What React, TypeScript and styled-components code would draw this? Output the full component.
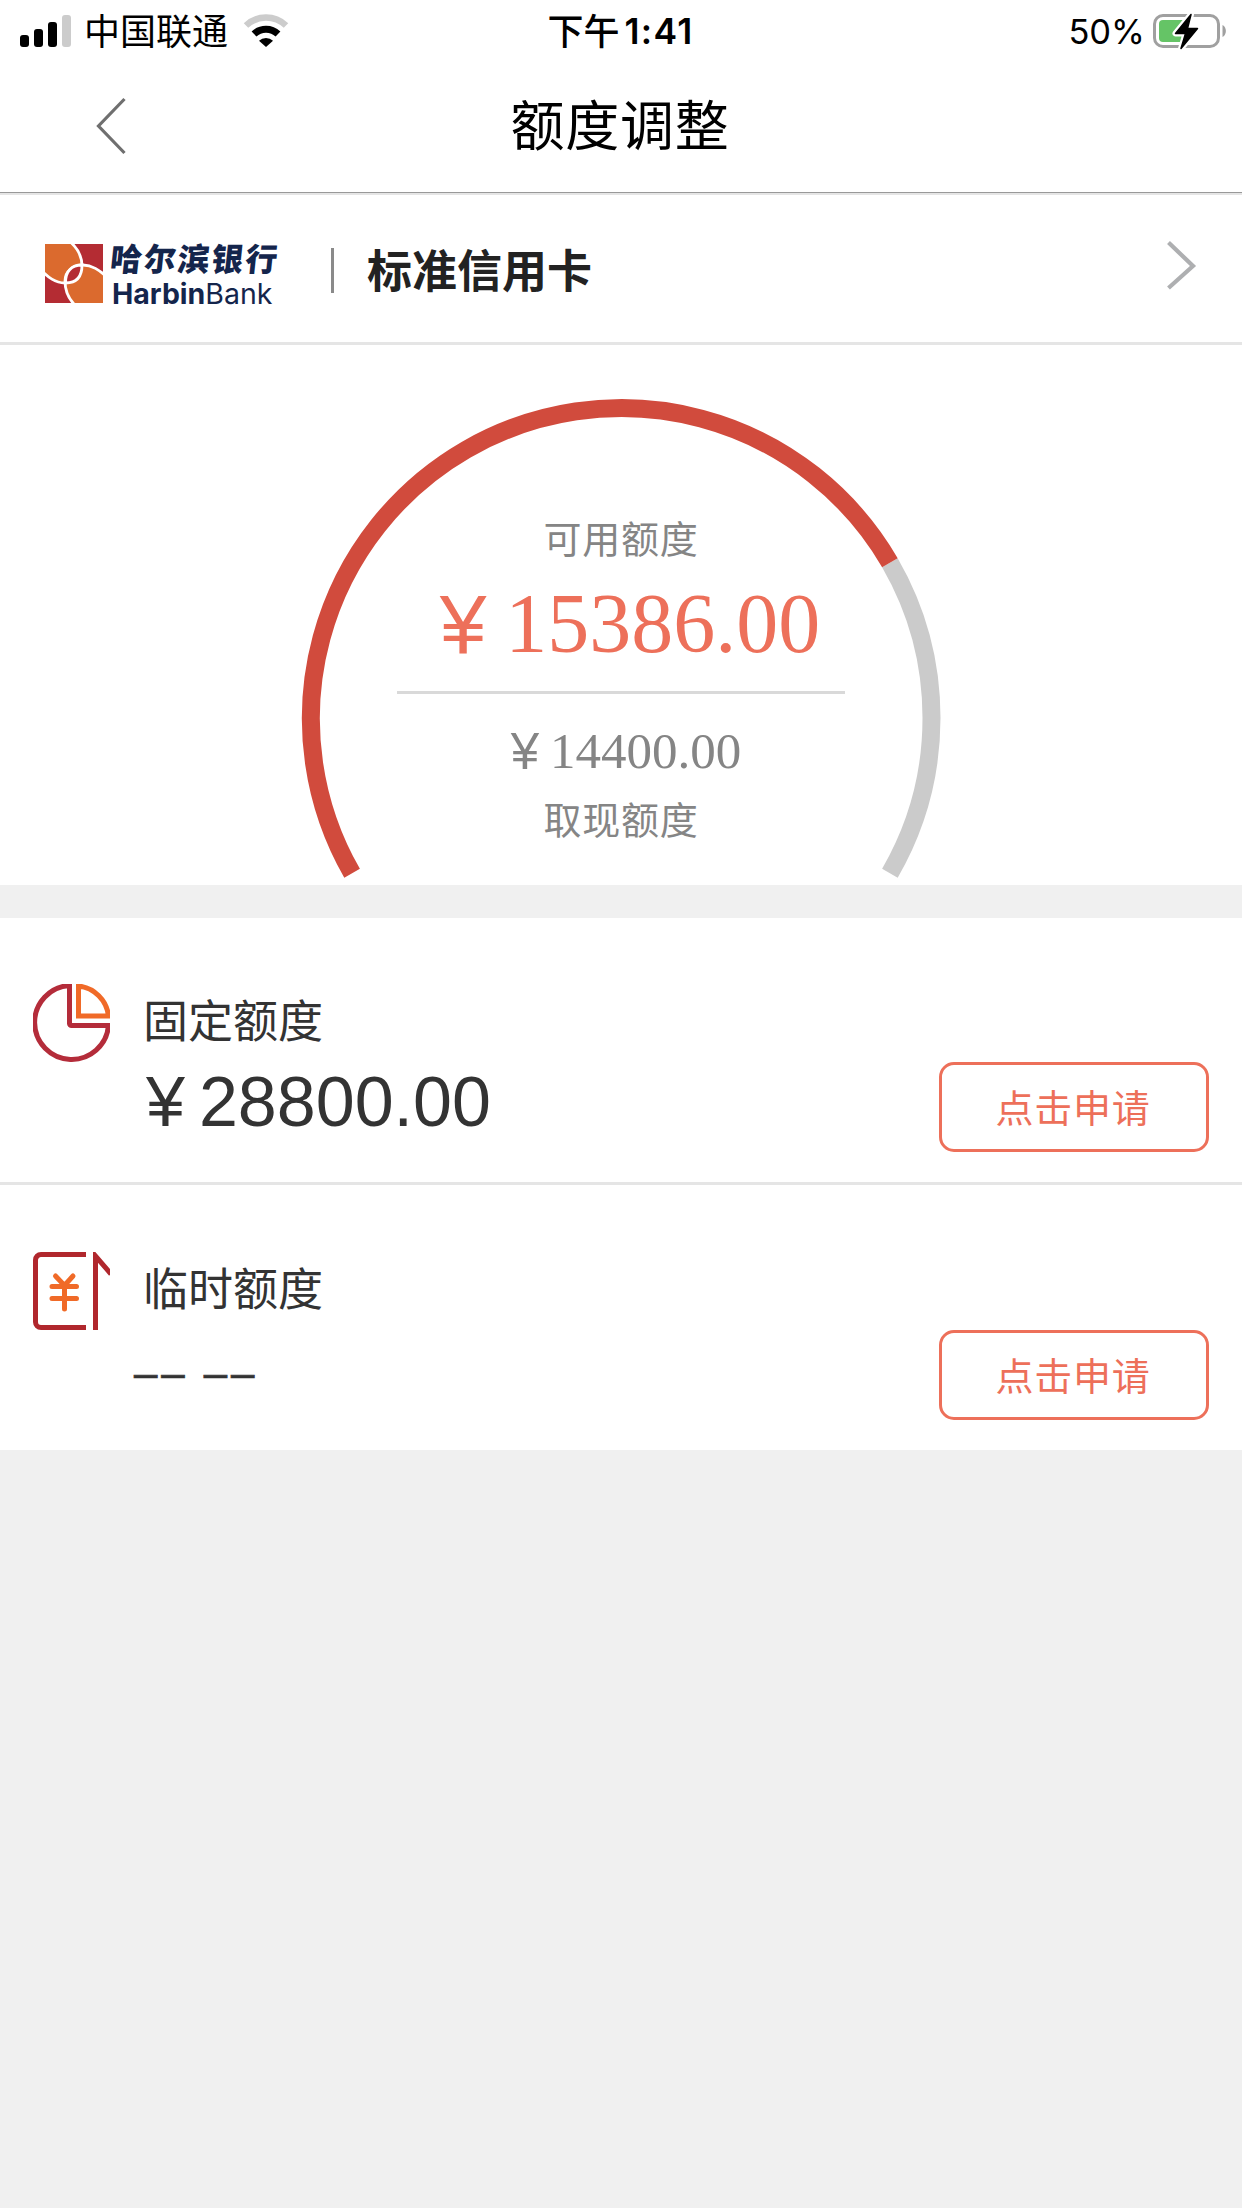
import React from "react";
import styled, { createGlobalStyle } from "styled-components";

const cjk = `"Liberation Sans", "Noto Sans CJK SC", sans-serif`;
const status = `Inter, "Noto Sans CJK SC", sans-serif`;
const coral = "#ed705a";

const GlobalStyle = createGlobalStyle`
  *, *::before, *::after { box-sizing: border-box; }
  body { margin: 0; background: #f0f0f0; }
`;

const Screen = styled.div`
  width: 1242px;
  min-height: 2208px;
  background: #f0f0f0;
  font-family: ${cjk};
  color: #333;
`;

const StatusBar = styled.header`
  display: grid;
  grid-template-columns: 1fr auto 1fr;
  align-items: center;
  height: 60px;
  padding: 0 14px 0 20px;
  background: #fff;
  color: #000;
  font-family: ${status};
  font-size: 36px;
  line-height: 60px;

  span { padding-top: 2px; }
`;

const Carrier = styled.div`
  display: flex;
  align-items: center;

  svg:last-child { margin-left: 15px; }
`;

const CarrierName = styled.span`
  margin-left: 12px;
  font-size: 36px;
`;

const Clock = styled.div`
  display: flex;
  gap: 5px;
  padding-right: 7px;
  font-weight: 500;
`;

const ClockTime = styled.span`
  font-size: 35.5px;
  font-weight: 600;
  letter-spacing: 1.3px;
`;

const Power = styled.div`
  display: flex;
  align-items: center;
  justify-content: flex-end;
  gap: 8px;
  font-size: 34.5px;
`;

const NavBar = styled.nav`
  display: grid;
  grid-template-columns: 1fr auto 1fr;
  align-items: center;
  height: 132px;
  padding-left: 95px;
  padding-right: 97px;
  background: #fff;
`;

const BackButton = styled.button`
  display: flex;
  justify-self: start;
  padding: 0;
  border: 0;
  background: none;
`;

const PageTitle = styled.h1`
  margin: 0;
  padding-top: 2px;
  color: #000;
  font-size: 54px;
  font-weight: 400;
  line-height: 60px;
  letter-spacing: 0.8px;
`;

const NavRule = styled.div`
  height: 3px;
  border-top: 1px solid #999;
  background: #e5e5e5;
`;

const CardRow = styled.section`
  display: flex;
  align-items: center;
  height: 150px;
  padding: 0 45px;
  border-bottom: 3px solid #e5e5e5;
  background: #fff;
`;

const Brand = styled.div`
  display: flex;
  width: 286px;
  height: 59px;
  margin-top: 9px;
  gap: 7px;
`;

const BrandText = styled.div`
  display: flex;
  flex-direction: column;
  color: #14254c;
  white-space: nowrap;

  > span { flex-shrink: 0; }
`;

const BrandChinese = styled.span`
  height: 34px;
  font-family: "Noto Sans CJK SC", sans-serif;
  font-size: 32px;
  font-weight: 900;
  line-height: 26px;
  letter-spacing: 1.8px;
  transform: skewX(-6deg);
`;

const BrandLatin = styled.span`
  padding-left: 2px;
  font-family: Inter, sans-serif;
  font-size: 28.5px;
  font-weight: 400;
  line-height: 31px;

  b { font-weight: 700; }
`;

const Divider = styled.span`
  width: 3px;
  height: 45px;
  margin: 4px 33px 0 0;
  background: #8a8a8a;
`;

const CardName = styled.h2`
  flex: 1;
  margin: 0;
  padding-top: 8px;
  color: #222;
  font-size: 45px;
  font-weight: 700;
  line-height: 50px;
`;

const Gauge = styled.section`
  display: grid;
  justify-items: center;
  height: 540px;
  background: #fff;

  > * { grid-area: 1 / 1; }
`;

const Readout = styled.div`
  display: flex;
  flex-direction: column;
  align-items: center;
  width: 448px;
  padding-top: 175px;
  color: #858585;
`;

const Caption = styled.div`
  font-size: 38px;
  line-height: 40px;
  letter-spacing: 0.8px;
`;

const Money = styled.div<{ $size: number; $gap: number; $shift: number }>`
  display: flex;
  gap: ${(p) => p.$gap}px;
  padding-left: ${(p) => p.$shift}px;
  font-size: ${(p) => p.$size}px;
  line-height: 1;
  white-space: nowrap;
`;

const Available = styled(Money)`
  margin-top: 22px;
  color: ${coral};
`;

const Cash = styled(Money)`
  margin: 32px 0 24px;
`;

const SerifDigits = styled.span`
  font-family: "Liberation Serif", serif;
`;

const Rule = styled.div`
  width: 448px;
  height: 3px;
  margin-top: 25px;
  background: #d9d9d9;
`;

const Limits = styled.main`
  margin-top: 33px;
`;

const LimitRow = styled.section<{ $ruled?: boolean }>`
  display: flex;
  height: ${(p) => (p.$ruled ? 267 : 265)}px;
  padding: ${(p) => (p.$ruled ? 66 : 67)}px 33px 0;
  border-bottom: ${(p) => (p.$ruled ? "3px solid #e5e5e5" : "0")};
  background: #fff;
`;

const LimitBody = styled.div`
  flex: 1;
  padding: 14px 0 0 33px;
`;

const LimitTitle = styled.h3`
  margin: 0;
  font-size: 45px;
  font-weight: 400;
  line-height: 50px;
`;

const LimitAmount = styled.div`
  display: flex;
  gap: 14px;
  margin: 18px 0 0 3px;
  font-size: 70px;
  line-height: 72px;
`;

const NoAmount = styled.div`
  margin: 32px 0 0 -9px;
  font-size: 42px;
  line-height: 50px;
  letter-spacing: 3.8px;
  -webkit-text-stroke: 0.7px #333;
`;

const ApplyButton = styled.button`
  width: 270px;
  height: 90px;
  margin-top: 78px;
  padding: 3px 2px 0 0;
  border: 3px solid ${coral};
  border-radius: 15px;
  background: #fff;
  color: ${coral};
  font-family: ${cjk};
  font-size: 38px;
  line-height: 40px;
  letter-spacing: 0.8px;
`;

const Signal = () => (
  <svg width="52" height="60" viewBox="0 0 52 60">
    <rect x="0" y="34" width="9" height="12" rx="3" />
    <rect x="14" y="28" width="9" height="18" rx="3" />
    <rect x="28" y="21" width="9" height="25" rx="3" />
    <rect x="42" y="14" width="9" height="32" rx="3" fill="#ccc" />
  </svg>
);

const Wifi = () => (
  <svg width="46" height="60" viewBox="0 0 46 60" fill="none">
    <path d="M3 24.5a29 29 0 0 1 40 0" stroke="#ccc" strokeWidth="6.5" />
    <path d="M11 33a17.5 17.5 0 0 1 24 0" stroke="#000" strokeWidth="7" />
    <path d="M16 39.8a10 10 0 0 1 14 0L23 46z" fill="#000" />
  </svg>
);

const Battery = () => (
  <svg width="75" height="60" viewBox="0 0 75 60">
    <rect x="1.5" y="14.5" width="64" height="31" rx="8.5" fill="none" stroke="#a0a0a0" strokeWidth="3" />
    <path d="M10 19h24v22H10a4 4 0 0 1-4-4V23a4 4 0 0 1 4-4z" fill="#65c466" />
    <path d="M69.5 24c4.5 2 4.5 10 0 12z" fill="#a0a0a0" />
    <path
      d="M38 13.5 22.5 32.5h10L28 47.5 44.5 27.5h-10z"
      stroke="#fff"
      strokeWidth="6"
      strokeLinejoin="round"
      fill="#fff"
    />
    <path d="M38 13.5 22.5 32.5h10L28 47.5 44.5 27.5h-10z" stroke="#000" strokeWidth="1.5" strokeLinejoin="round" />
  </svg>
);

const BackIcon = () => (
  <svg width="34" height="60" viewBox="0 0 34 60" fill="none">
    <path d="M29.5 3 3.5 30l26 27" stroke="#6f6f6f" strokeWidth="3.2" />
  </svg>
);

const ForwardIcon = styled.svg`
  margin-top: -7px;
`;

const Forward = () => (
  <ForwardIcon width="30" height="50" viewBox="0 0 30 50" fill="none">
    <path d="M1.5 2.5 26 26 1.5 48" stroke="#aeafb1" strokeWidth="4.2" />
  </ForwardIcon>
);

const HarbinMark = () => (
  <svg width="58" height="59" viewBox="0 0 58 59">
    <rect width="58" height="59" fill="#b42c33" />
    <g stroke="#fff" strokeWidth="2.8">
      <path d="M-4-4H23C32 3 37 12 37 22 37 33 30 39 20 39 10 39 3 33-4 26z" fill="#db6a2e" />
      <path d="M62 63H32C24 56 20 46 20 37 20 27 28 21 38 21 47 21 54 26 62 33z" fill="#db6a2e" />
      <path d="M37 21C37 33 31 39 20.5 39 20.5 28 26 21 37 21z" fill="#b42c33" />
    </g>
  </svg>
);

const Arc = () => (
  <svg width="660" height="540" viewBox="-330 0.5 660 540" fill="none" strokeWidth="18">
    <path d="M268.9 218.25A310.5 310.5 0 0 1 268.9 528.75" stroke="#cbcbcb" />
    <path d="M-268.9 528.75A310.5 310.5 0 0 1 268.9 218.25" stroke="#d14b3d" />
  </svg>
);

const PieIcon = () => (
  <svg width="77" height="78" viewBox="0 0 77 78" fill="none" strokeWidth="5">
    <path d="M36.5 1.5A37 37 0 1 0 75.5 41.5H38.5a2 2 0 0 1-2-2z" stroke="#b42c3a" />
    <path d="M45.5 2V32H75.5A34 34 0 0 0 45.5 2z" stroke="#f06a28" />
  </svg>
);

const BillIcon = () => (
  <svg width="77" height="78" viewBox="0 0 77 78" fill="none" strokeWidth="5">
    <path d="M53 2.5H8a5.5 5.5 0 0 0-5.5 5.5V70A5.5 5.5 0 0 0 8 75.5h45M62.5 78V4L78 22" stroke="#b0272d" />
    <path d="M22.5 24 31.5 33.5 40 24M31.5 33V57M19 34.5H43.5M19 46.5H43.5" stroke="#f06a28" strokeLinecap="round" />
  </svg>
);

export default function App() {
  return (
    <Screen>
      <GlobalStyle />
      <StatusBar>
        <Carrier>
          <Signal />
          <CarrierName>中国联通</CarrierName>
          <Wifi />
        </Carrier>
        <Clock>
          <span>下午</span>
          <ClockTime>1:41</ClockTime>
        </Clock>
        <Power>
          <span>50%</span>
          <Battery />
        </Power>
      </StatusBar>
      <NavBar>
        <BackButton aria-label="返回">
          <BackIcon />
        </BackButton>
        <PageTitle>额度调整</PageTitle>
      </NavBar>
      <NavRule />
      <CardRow>
        <Brand>
          <HarbinMark />
          <BrandText>
            <BrandChinese>哈尔滨银行</BrandChinese>
            <BrandLatin>
              <b>Harbin</b>Bank
            </BrandLatin>
          </BrandText>
        </Brand>
        <Divider />
        <CardName>标准信用卡</CardName>
        <Forward />
      </CardRow>
      <Gauge>
        <Arc />
        <Readout>
          <Caption>可用额度</Caption>
          <Available $size={84} $gap={19} $shift={18}>
            <span>¥</span>
            <SerifDigits>15386.00</SerifDigits>
          </Available>
          <Rule />
          <Cash $size={51} $gap={11} $shift={10}>
            <span>¥</span>
            <SerifDigits>14400.00</SerifDigits>
          </Cash>
          <Caption>取现额度</Caption>
        </Readout>
      </Gauge>
      <Limits>
        <LimitRow $ruled>
          <PieIcon />
          <LimitBody>
            <LimitTitle>固定额度</LimitTitle>
            <LimitAmount>
              <span>¥</span>
              <span>28800.00</span>
            </LimitAmount>
          </LimitBody>
          <ApplyButton>点击申请</ApplyButton>
        </LimitRow>
        <LimitRow>
          <BillIcon />
          <LimitBody>
            <LimitTitle>临时额度</LimitTitle>
            <NoAmount>–– ––</NoAmount>
          </LimitBody>
          <ApplyButton>点击申请</ApplyButton>
        </LimitRow>
      </Limits>
    </Screen>
  );
}
